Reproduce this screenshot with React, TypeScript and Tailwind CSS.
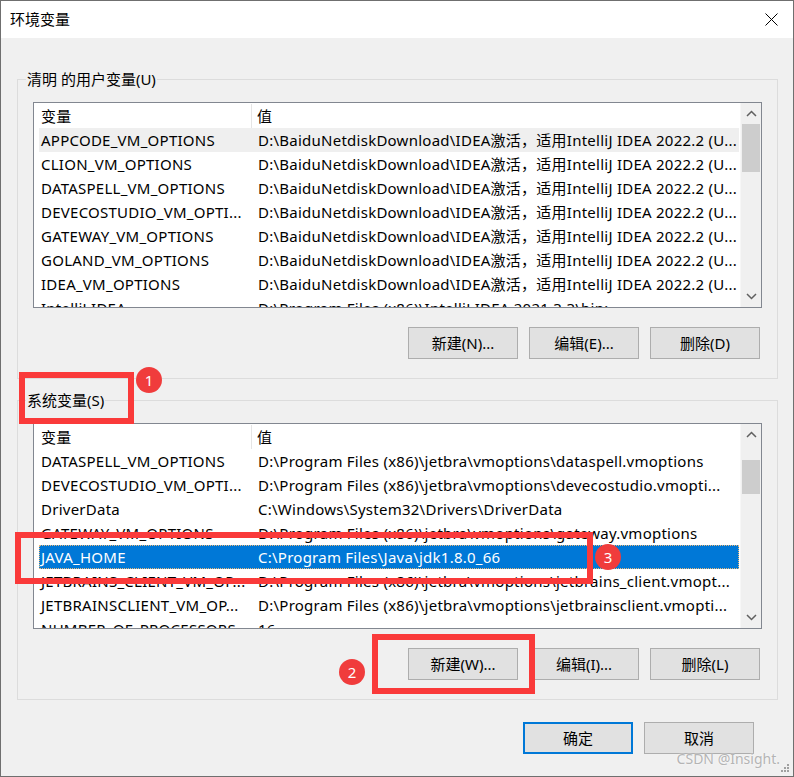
import React from 'react';

const TOP_VALUE = 'D:\\BaiduNetdiskDownload\\IDEA激活，适用IntelliJ IDEA 2022.2 (U...';

const userVars: [string, string][] = [
  ['APPCODE_VM_OPTIONS', TOP_VALUE],
  ['CLION_VM_OPTIONS', TOP_VALUE],
  ['DATASPELL_VM_OPTIONS', TOP_VALUE],
  ['DEVECOSTUDIO_VM_OPTI...', TOP_VALUE],
  ['GATEWAY_VM_OPTIONS', TOP_VALUE],
  ['GOLAND_VM_OPTIONS', TOP_VALUE],
  ['IDEA_VM_OPTIONS', TOP_VALUE],
  ['IntelliJ IDEA', 'D:\\Program Files (x86)\\IntelliJ IDEA 2021.3.3\\bin;'],
];

const sysVars: [string, string][] = [
  ['DATASPELL_VM_OPTIONS', 'D:\\Program Files (x86)\\jetbra\\vmoptions\\dataspell.vmoptions'],
  ['DEVECOSTUDIO_VM_OPTI...', 'D:\\Program Files (x86)\\jetbra\\vmoptions\\devecostudio.vmopti...'],
  ['DriverData', 'C:\\Windows\\System32\\Drivers\\DriverData'],
  ['GATEWAY_VM_OPTIONS', 'D:\\Program Files (x86)\\jetbra\\vmoptions\\gateway.vmoptions'],
  ['JAVA_HOME', 'C:\\Program Files\\Java\\jdk1.8.0_66'],
  ['JETBRAINS_CLIENT_VM_OP...', 'D:\\Program Files (x86)\\jetbra\\vmoptions\\jetbrains_client.vmopt...'],
  ['JETBRAINSCLIENT_VM_OP...', 'D:\\Program Files (x86)\\jetbra\\vmoptions\\jetbrainsclient.vmopti...'],
  ['NUMBER_OF_PROCESSORS', '16'],
];

const Chevron = ({ up }: { up?: boolean }) => (
  <svg width="11" height="7" viewBox="0 0 11 7" className={up ? '' : 'rotate-180'}>
    <path d="M1 6 L5.5 1.5 L10 6" fill="none" stroke="#606060" strokeWidth="1.5" />
  </svg>
);

const ScrollBar = ({ offset, thumb }: { offset: number; thumb: number }) => (
  <div className="w-[21px] flex flex-col bg-[#f0f0f0] border-l border-[#f7f7f7]">
    <div className="h-[21px] flex items-center justify-center">
      <Chevron up />
    </div>
    <div className="flex-1 px-px">
      <div className="bg-[#cdcdcd]" style={{ marginTop: offset, height: thumb }} />
    </div>
    <div className="h-[21px] flex items-center justify-center">
      <Chevron />
    </div>
  </div>
);

const VarList = ({
  rows,
  hot,
  selected,
  offset,
  thumb,
}: {
  rows: [string, string][];
  hot?: number;
  selected?: number;
  offset: number;
  thumb: number;
}) => (
  <div className="w-[729px] h-[206px] border border-[#828790] bg-white flex">
    <div className="flex-1 overflow-hidden tracking-[0.25px]">
      <div className="h-[25px] flex items-center pt-px">
        <div className="w-[218px] h-full pl-[7px] flex items-center border-r border-[#e5e5e5]">变量</div>
        <div className="pl-[5px]">值</div>
      </div>
      {rows.map(([name, value], i) => (
        <div
          key={name + i}
          className={
            'h-[24px] ml-[5px] mr-px pt-px flex items-center whitespace-nowrap ' +
            (i === selected
              ? 'bg-[#0078d7] text-white outline outline-1 outline-dotted outline-[#e8b77a] -outline-offset-1'
              : i === hot
              ? 'bg-[#efefef]'
              : '')
          }
        >
          <div className="w-[213px] pl-[2px] overflow-hidden shrink-0">{name}</div>
          <div className="pl-[6px] overflow-hidden">{value}</div>
        </div>
      ))}
    </div>
    <ScrollBar offset={offset} thumb={thumb} />
  </div>
);

const Btn = ({ label, primary }: { label: string; primary?: boolean }) => (
  <button
    className={
      'w-[110px] h-[32px] bg-[#e1e1e1] flex items-center justify-center ' +
      (primary ? 'border-2 border-[#0078d7]' : 'border border-[#adadad]')
    }
  >
    {label}
  </button>
);

const Group = ({
  title,
  children,
  buttons,
  className,
}: {
  title: string;
  children: React.ReactNode;
  buttons: string[];
  className: string;
}) => (
  <fieldset className={'w-[761px] border border-[#dcdcdc] px-[15px] pt-[13px] pb-[19px] ' + className}>
    <legend className="-ml-[7px] px-px leading-[20px]">{title}</legend>
    {children}
    <div className="mt-[19px] pr-[2px] flex justify-end gap-[11px]">
      {buttons.map((b) => (
        <Btn key={b} label={b} />
      ))}
    </div>
  </fieldset>
);

const Badge = ({ n, className }: { n: string; className: string }) => (
  <div
    className={
      'absolute w-[26px] h-[26px] rounded-full bg-[#f03c3c] text-white text-[15px] flex items-center justify-center ' +
      className
    }
  >
    {n}
  </div>
);

export default function App() {
  return (
    <div className="relative w-[794px] h-[777px] bg-[#f0f0f0] border border-[#6f6f6f] text-[15px] text-black font-['Noto_Sans','Noto_Sans_CJK_SC',sans-serif] overflow-hidden">
      {/* Title bar */}
      <div className="h-[37px] bg-white flex items-center justify-between pl-[9px] pr-[15px]">
        <span>环境变量</span>
        <svg width="13" height="13" viewBox="0 0 13 13">
          <path d="M0.5 0.5 L12.5 12.5 M12.5 0.5 L0.5 12.5" stroke="#000" strokeWidth="1" />
        </svg>
      </div>

      <Group title="清明 的用户变量(U)" buttons={['新建(N)...', '编辑(E)...', '删除(D)']} className="ml-[16px] mt-[31px]">
        <VarList rows={userVars} hot={0} offset={0} thumb={48} />
      </Group>

      <Group title="系统变量(S)" buttons={['新建(W)...', '编辑(I)...', '删除(L)']} className="ml-[16px] mt-[11px]">
        <VarList rows={sysVars} selected={4} offset={15} thumb={34} />
      </Group>

      <div className="mt-[22px] pr-[39px] flex justify-end gap-[11px]">
        <Btn label="确定" primary />
        <Btn label="取消" />
      </div>

      {/* watermark + size grip */}
      <div className="absolute right-[13px] bottom-[7px] text-[14px] text-[#b4b4b4] [text-shadow:0_0_2px_#fff]">
        CSDN @Insight.
      </div>
      <svg className="absolute right-[3px] bottom-[3px]" width="10" height="10" viewBox="0 0 10 10">
        <g fill="#a0a0a0">
          <rect x="7" y="1" width="2" height="2" />
          <rect x="4" y="4" width="2" height="2" />
          <rect x="7" y="4" width="2" height="2" />
          <rect x="1" y="7" width="2" height="2" />
          <rect x="4" y="7" width="2" height="2" />
          <rect x="7" y="7" width="2" height="2" />
        </g>
      </svg>

      {/* red annotations */}
      <div className="absolute left-[18px] top-[371px] w-[115px] h-[52px] border-[6px] border-[#fa3a3a]" />
      <Badge n="1" className="left-[135px] top-[366px]" />
      <div className="absolute left-[14px] top-[531px] w-[578px] h-[52px] border-[6px] border-[#fa3a3a]" />
      <Badge n="3" className="left-[594px] top-[543px]" />
      <div className="absolute left-[371px] top-[633px] w-[163px] h-[60px] border-[6px] border-[#fa3a3a]" />
      <Badge n="2" className="left-[338px] top-[658px]" />
    </div>
  );
}
